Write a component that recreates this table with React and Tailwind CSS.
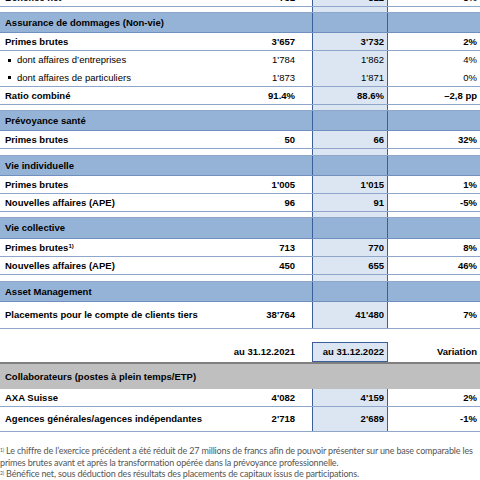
const Cell = ({ children, className = "" }) => (
  <div className={`flex items-center justify-end ${className}`}>{children}</div>
);

const Row = ({ label, a, b, c, bold = true, bullet = false, line = true, h = "h-[18px]", sup }) => (
  <div
    className={`grid grid-cols-[232px_80px_76px_92px] ${h} ${line ? "border-b border-[#8da6c9]" : ""} ${
      bold ? "font-bold" : ""
    }`}
  >
    <div className="flex items-center pl-[5px]">
      {bullet && <span className="w-[3px] h-[3px] bg-black ml-[3px] mr-[6px]"></span>}
      <span>
        {label}
        {sup && <sup className="text-[6px]">{sup}</sup>}
      </span>
    </div>
    <Cell className="pr-[17px]">{a}</Cell>
    <Cell className="pr-[3px] bg-[#dce6f2] border-x border-[#3d5f99]">{b}</Cell>
    <Cell className="pr-[3px]">{c}</Cell>
  </div>
);

const Spacer = ({ h = "h-[6px]" }) => (
  <div className={`grid grid-cols-[232px_80px_76px_92px] ${h} border-b border-[#8da6c9]`}>
    <div></div>
    <div></div>
    <div className="bg-[#dce6f2] border-x border-[#3d5f99]"></div>
    <div></div>
  </div>
);

const Header = ({ title, h = "h-[20px]" }) => (
  <div className={`grid grid-cols-[232px_80px_76px_92px] ${h} bg-[#95b3d7] border-b border-[#6f8fbf] font-bold`}>
    <div className="flex items-center pl-[5px]">{title}</div>
    <div></div>
    <div className="border-x border-[#3d5f99]"></div>
    <div></div>
  </div>
);

export default function App() {
  return (
    <div className="w-[480px] h-[480px] overflow-hidden bg-white text-black text-[9.5px] leading-none font-['Liberation_Sans',Arial,sans-serif]">
      <div className="-mt-[11px]">
        <Row label="Bénéfice net" a="751" b="812" c="8%" />
      </div>
      <Spacer />
      <Header title="Assurance de dommages (Non-vie)" />
      <Row label="Primes brutes" a="3'657" b="3'732" c="2%" />
      <Row label="dont affaires d’entreprises" a="1'784" b="1'862" c="4%" bold={false} bullet line={false} />
      <Row label="dont affaires de particuliers" a="1'873" b="1'871" c="0%" bold={false} bullet />
      <Row label="Ratio combiné" a="91.4%" b="88.6%" c="–2,8 pp" />
      <Spacer />
      <Header title="Prévoyance santé" />
      <Row label="Primes brutes" a="50" b="66" c="32%" />
      <Spacer h="h-[7px]" />
      <Header title="Vie individuelle" />
      <Row label="Primes brutes" a="1'005" b="1'015" c="1%" />
      <Row label="Nouvelles affaires (APE)" a="96" b="91" c="-5%" />
      <Spacer />
      <Header title="Vie collective" h="h-[21px]" />
      <Row label="Primes brutes" sup="1)" a="713" b="770" c="8%" />
      <Row label="Nouvelles affaires (APE)" a="450" b="655" c="46%" />
      <Spacer h="h-[7px]" />
      <Header title="Asset Management" />
      <Row label="Placements pour le compte de clients tiers" a="38'764" b="41'480" c="7%" h="h-[27px]" />

      <div className="grid grid-cols-[232px_80px_76px_92px] h-[20px] mt-[13px] font-bold">
        <div></div>
        <Cell className="pr-[17px]">au 31.12.2021</Cell>
        <Cell className="pr-[3px] bg-[#dce6f2] border border-[#3d5f99]">au 31.12.2022</Cell>
        <Cell className="pr-[3px]">Variation</Cell>
      </div>
      <div className="grid grid-cols-[232px_80px_76px_92px] h-[27px] bg-[#bfbfbf] border-t-2 border-[#7f7f7f] font-bold">
        <div className="flex items-center pl-[5px] col-span-4">Collaborateurs (postes à plein temps/ETP)</div>
      </div>
      <Row label="AXA Suisse" a="4'082" b="4'159" c="2%" />
      <Row label="Agences générales/agences indépendantes" a="2'718" b="2'689" c="-1%" h="h-[25px]" />

      <div className="mt-[13px] text-[9px] leading-[11.5px] text-[#555] font-['Lato',sans-serif] tracking-[-0.16px]">
        <p className="whitespace-nowrap">
          <sup className="text-[5px]">1)</sup> Le chiffre de l’exercice précédent a été réduit de 27 millions de francs afin de pouvoir présenter sur une base comparable les
        </p>
        <p className="whitespace-nowrap">primes brutes avant et après la transformation opérée dans la prévoyance professionnelle.</p>
        <p className="whitespace-nowrap">
          <sup className="text-[5px]">2)</sup> Bénéfice net, sous déduction des résultats des placements de capitaux issus de participations.
        </p>
      </div>
    </div>
  );
}
